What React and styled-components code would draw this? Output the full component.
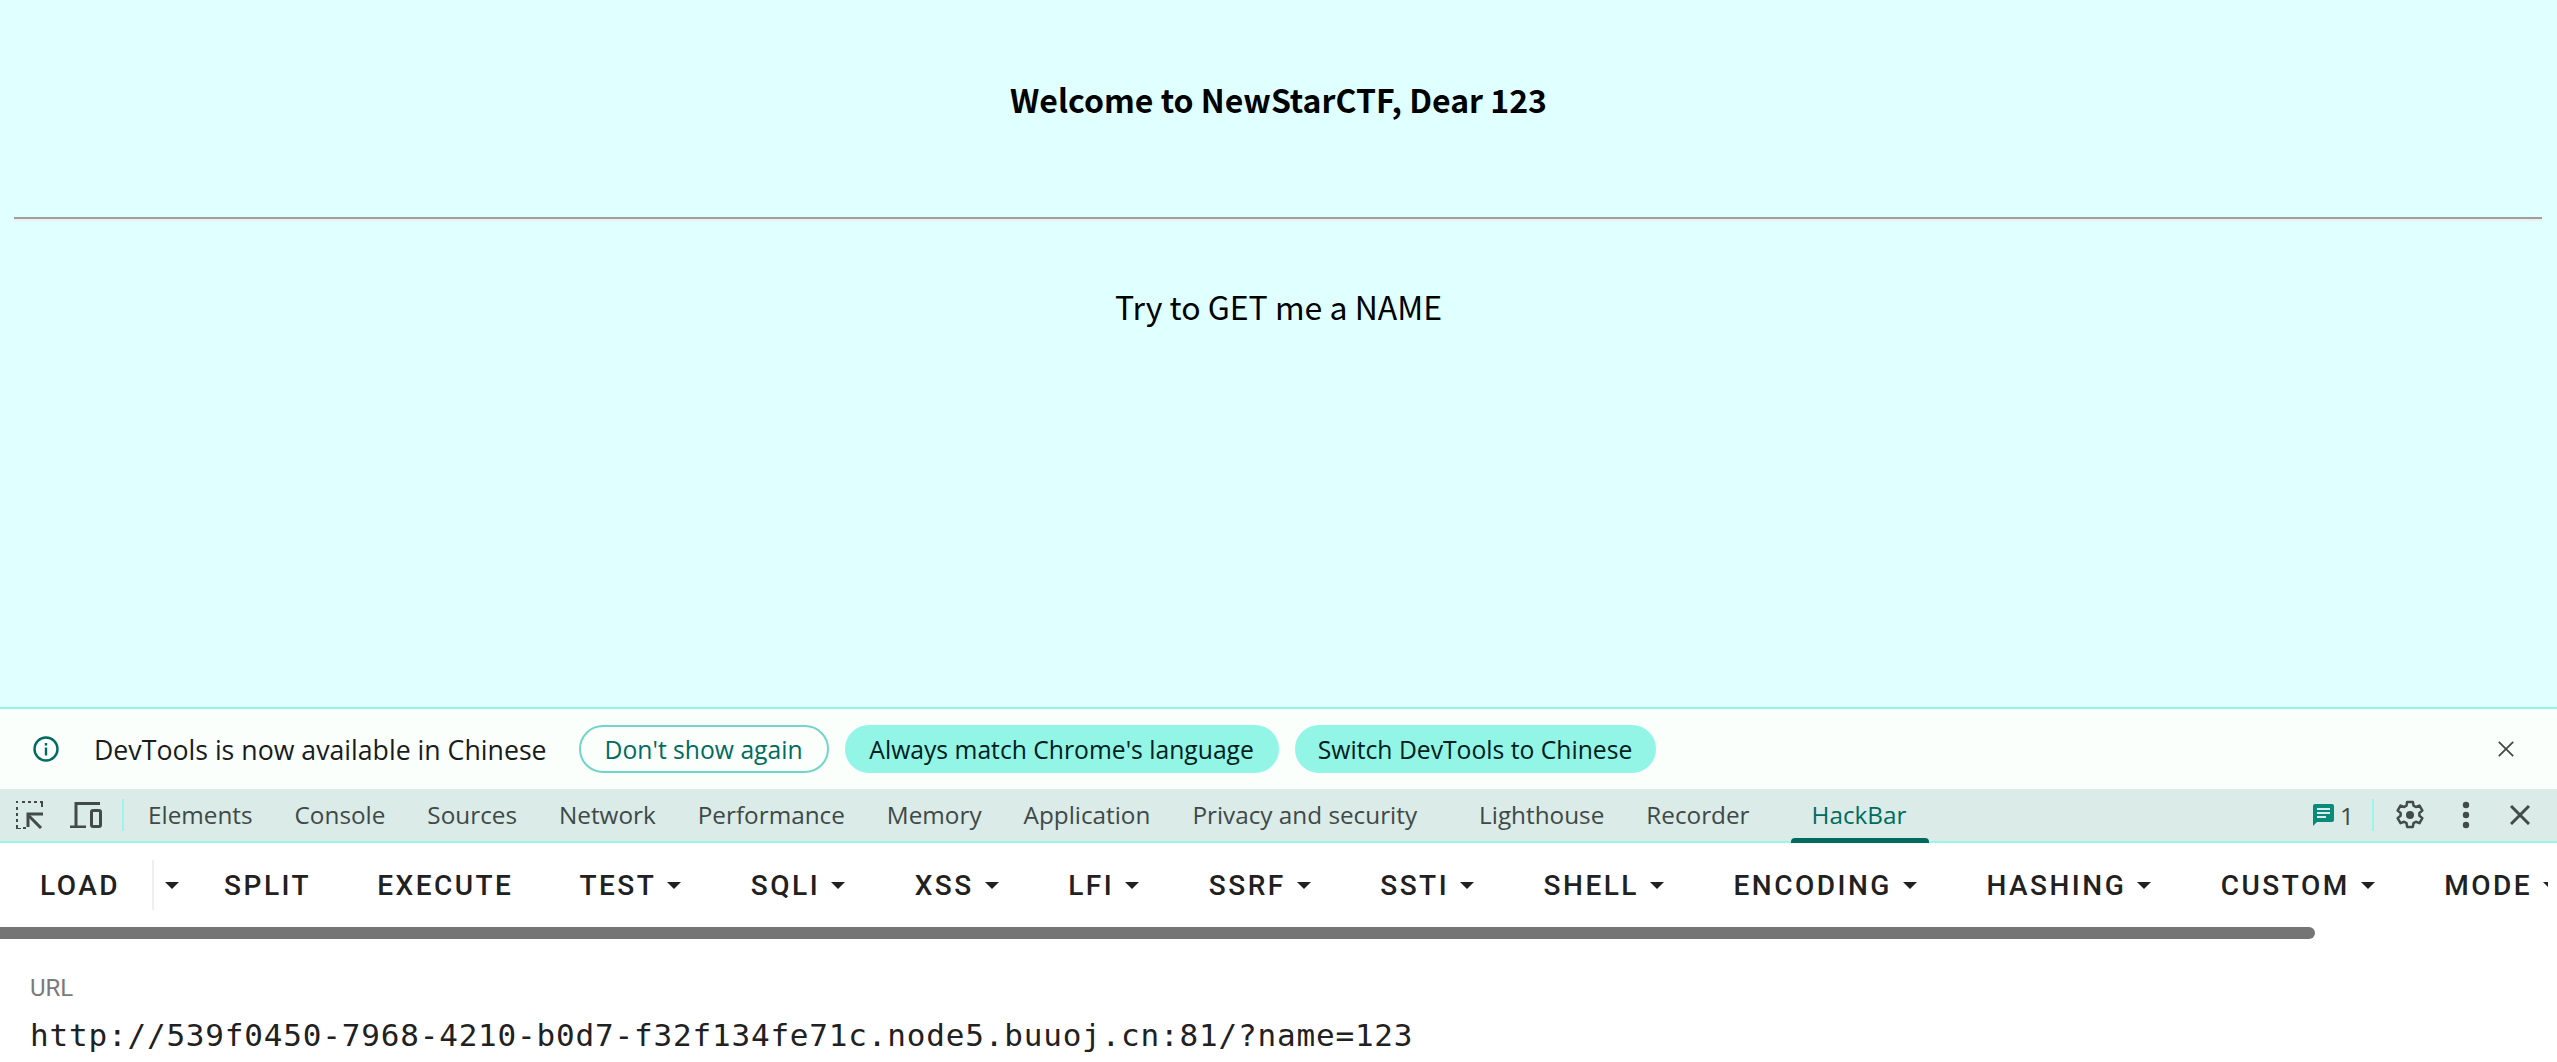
import React from 'react';
import styled, { createGlobalStyle } from 'styled-components';

const GlobalStyle = createGlobalStyle`
  html, body {
    margin: 0;
    padding: 0;
    height: 1062px;
    overflow: hidden;
    background: #ffffff;
  }
`;

const Screen = styled.div`
  width: 2557px;
  height: 1062px;
  display: flex;
  flex-direction: column;
  overflow: hidden;
`;

const Page = styled.main`
  height: 707px;
  flex: none;
  padding: 0 14px;
  background: #e0ffff;
  color: #000000;
  font-family: 'Noto Sans CJK SC', sans-serif;
  text-align: center;
`;

const Heading = styled.h3`
  margin: 0;
  height: 217px;
  padding-top: 71px;
  box-sizing: border-box;
  font-size: 32px;
  line-height: 56px;
  font-weight: 700;
`;

const Rule = styled.hr`
  margin: 0 1px 0 0;
  height: 2px;
  border: none;
  border-bottom: 2px solid #eeeeee;
  background: #9f9f9f;
`;

const Message = styled.p`
  margin: 0;
  padding-top: 61px;
  font-size: 32px;
  line-height: 48px;
`;

const InfoBar = styled.div`
  height: 82px;
  flex: none;
  box-sizing: border-box;
  border-top: 2px solid #93f5e6;
  padding: 0 43px 0 33px;
  display: flex;
  align-items: center;
  background: #fafffc;
  font-family: 'Open Sans', sans-serif;
  font-size: 26.7px;
`;

const InfoText = styled.span`
  margin-left: 35px;
  margin-right: 32px;
  color: #191c1b;
`;

const PillRow = styled.div`
  flex: 1;
  display: flex;
  gap: 16px;
`;

const Pill = styled.button`
  height: 48px;
  width: ${(props) => props.$width}px;
  padding: 0;
  box-sizing: border-box;
  border-radius: 24px;
  border: 2px solid ${(props) => (props.$filled ? '#92f5e6' : '#72d5c8')};
  background: ${(props) => (props.$filled ? '#92f5e6' : 'transparent')};
  color: ${(props) => (props.$filled ? '#00201c' : '#006b5f')};
  font-family: 'Open Sans', sans-serif;
  font-size: 24.7px;
`;

const TabBar = styled.div`
  height: 54px;
  flex: none;
  box-sizing: border-box;
  border-bottom: 2px solid #9bf5e8;
  display: flex;
  align-items: center;
  background: #daebe8;
  font-family: 'Open Sans', sans-serif;
  font-size: 24.3px;
  color: #3f4947;
`;

const ToolIcons = styled.div`
  display: flex;
  align-items: center;
  padding-left: 16px;
  gap: 26px;
`;

const Divider = styled.span`
  width: 2px;
  height: 32px;
  background: #9bf5e8;
  margin-left: ${(props) => props.$left || 0}px;
`;

const Tabs = styled.div`
  flex: 1;
  height: 100%;
  display: flex;
  align-items: center;
`;

const Tab = styled.span`
  position: relative;
  margin-left: ${(props) => props.$gap}px;
  color: ${(props) => (props.$active ? '#006b5f' : '#3f4947')};
  line-height: 52px;

  ${(props) =>
    props.$active &&
    `
    &::after {
      content: '';
      position: absolute;
      left: -21px;
      right: -22px;
      bottom: -2px;
      height: 5px;
      border-radius: 4px 4px 0 0;
      background: #006a5e;
    }
  `}
`;

const TabActions = styled.div`
  display: flex;
  align-items: center;
  padding-right: 27px;
`;

const Count = styled.span`
  margin-left: 6px;
  color: #3f4947;
`;

const ActionIcon = styled.svg`
  display: block;
  flex: none;
  margin-left: ${(props) => props.$left || 0}px;
`;

const Toolbar = styled.div`
  height: 84px;
  flex: none;
  margin-right: 9px;
  padding-left: 40px;
  display: flex;
  align-items: center;
  overflow: hidden;
  background: #ffffff;
  font-family: Roboto, sans-serif;
  font-size: 28px;
  font-weight: 500;
  letter-spacing: 2.5px;
  color: #212121;
  white-space: nowrap;
`;

const ToolGroup = styled.div`
  display: flex;
  align-items: center;
  flex: none;
  margin-right: ${(props) => props.$after}px;
`;

const ToolLabel = styled.span`
  display: block;
  flex: none;
  margin-right: ${(props) => props.$after || 0}px;
`;

const LoadSplit = styled.span`
  width: 2px;
  height: 50px;
  margin: 0 11px 0 32px;
  background: #efefef;
`;

const Caret = styled.span`
  width: 0;
  height: 0;
  flex: none;
  margin-left: ${(props) => props.$left}px;
  border-left: 7.5px solid transparent;
  border-right: 7.5px solid transparent;
  border-top: 7.5px solid #212121;
`;

const ScrollTrack = styled.div`
  height: 12px;
  flex: none;
`;

const ScrollThumb = styled.div`
  width: 2315px;
  height: 12px;
  border-radius: 0 6px 6px 0;
  background: #757575;
`;

const UrlField = styled.div`
  flex: 1;
  padding: 36px 30px 0;
  background: #ffffff;
`;

const UrlLabel = styled.div`
  font-family: Roboto, sans-serif;
  font-size: 24px;
  line-height: 26px;
  color: #7a7a7a;
`;

const UrlValue = styled.div`
  margin-top: 14px;
  font-family: 'DejaVu Sans Mono', monospace;
  font-size: 31px;
  letter-spacing: 0.82px;
  line-height: 40px;
  color: #212121;
  white-space: nowrap;
`;

const tabs = [
  ['Elements', 24],
  ['Console', 42],
  ['Sources', 42],
  ['Network', 42],
  ['Performance', 42],
  ['Memory', 42],
  ['Application', 42],
  ['Privacy and security', 42],
  ['Lighthouse', 62],
  ['Recorder', 42],
];

const menus = ['TEST', 'SQLI', 'XSS', 'LFI', 'SSRF', 'SSTI', 'SHELL', 'ENCODING', 'HASHING', 'CUSTOM', 'MODE'];

function InfoIcon() {
  return (
    <svg width="26" height="26" viewBox="0 0 26 26" fill="none" style={{ flex: 'none' }}>
      <circle cx="13" cy="13" r="11.5" stroke="#006b5f" strokeWidth="2.4" />
      <rect x="11.8" y="11.5" width="2.4" height="8" fill="#006b5f" />
      <rect x="11.8" y="7" width="2.4" height="2.6" fill="#006b5f" />
    </svg>
  );
}

function SelectIcon() {
  return (
    <svg width="28" height="28" viewBox="0 0 28 28" fill="none">
      <path d="M0 2V0H2V2ZM6 2V0H9V2ZM12 2V0H15V2ZM18 2V0H21V2ZM24 2V0H27V2V6H25V2ZM0 6H2V9H0ZM0 12H2V15H0ZM0 18H2V21H0ZM0 24H2V27H5V28H0ZM7 26H10V28H7Z" fill="#434b4a" />
      <path d="M25 27L13 15" stroke="#434b4a" strokeWidth="3" />
      <path d="M12 27V14H27" stroke="#434b4a" strokeWidth="3" fill="none" transform="translate(0 -1)" />
    </svg>
  );
}

function DeviceIcon() {
  return (
    <svg width="32" height="26" viewBox="0 0 32 26" fill="none">
      <path d="M0 25H16M6 25V1.5H30" stroke="#434b4a" strokeWidth="3" />
      <rect x="21.5" y="8.5" width="9" height="16" rx="1.5" stroke="#434b4a" strokeWidth="3" />
    </svg>
  );
}

function MessageIcon() {
  return (
    <ActionIcon width="21" height="22" viewBox="0 0 21 22">
      <path d="M2 0H19A2 2 0 0 1 21 2V16A2 2 0 0 1 19 18H4L0 22V2A2 2 0 0 1 2 0Z" fill="#0a8a7a" />
      <rect x="4" y="4" width="13" height="2" fill="#daebe8" />
      <rect x="4" y="8" width="13" height="2" fill="#daebe8" />
      <rect x="4" y="12" width="9" height="2" fill="#daebe8" />
    </ActionIcon>
  );
}

function GearIcon() {
  return (
    <ActionIcon $left={21} width="30" height="30" viewBox="0 0 24 24" fill="none">
      <path
        d="M9.7 1.500h4.600l.5 3 1.900 1.100 2.900-1.100 2.300 4-2.400 1.900v2.200l2.400 1.900-2.300 4-2.900-1.100-1.900 1.100-.5 3H9.700l-.5-3-1.900-1.100-2.900 1.100-2.300-4 2.400-1.900v-2.200L2.100 8.500l2.300-4 2.900 1.100 1.900-1.100z"
        stroke="#434b4a"
        strokeWidth="2"
        strokeLinejoin="round"
      />
      <circle cx="12" cy="12" r="3.2" fill="#434b4a" />
    </ActionIcon>
  );
}

function DotsIcon() {
  return (
    <ActionIcon $left={37} width="8" height="28" viewBox="0 0 8 28" fill="#434b4a">
      <circle cx="4" cy="4" r="3.2" />
      <circle cx="4" cy="14" r="3.2" />
      <circle cx="4" cy="24" r="3.2" />
    </ActionIcon>
  );
}

function CloseIcon({ size, left, width, color }) {
  return (
    <ActionIcon $left={left} width={size} height={size} viewBox="0 0 20 20" fill="none">
      <path d="M1 1L19 19M19 1L1 19" stroke={color} strokeWidth={width} />
    </ActionIcon>
  );
}

export default function App() {
  return (
    <Screen>
      <GlobalStyle />
      <Page>
        <Heading>Welcome to NewStarCTF, Dear 123</Heading>
        <Rule />
        <Message>Try to GET me a NAME</Message>
      </Page>
      <InfoBar>
        <InfoIcon />
        <InfoText>DevTools is now available in Chinese</InfoText>
        <PillRow>
          <Pill $width={250}>Don't show again</Pill>
          <Pill $width={434} $filled>Always match Chrome's language</Pill>
          <Pill $width={361} $filled>Switch DevTools to Chinese</Pill>
        </PillRow>
        <CloseIcon size={16} width={2.2} color="#3f4947" />
      </InfoBar>
      <TabBar>
        <ToolIcons>
          <SelectIcon />
          <DeviceIcon />
        </ToolIcons>
        <Divider $left={20} />
        <Tabs>
          {tabs.map(([name, gap]) => (
            <Tab key={name} $gap={gap}>{name}</Tab>
          ))}
          <Tab $gap={62} $active>HackBar</Tab>
        </Tabs>
        <TabActions>
          <MessageIcon />
          <Count>1</Count>
          <Divider $left={18} />
          <GearIcon />
          <DotsIcon />
          <CloseIcon size={20} left={40} width={3} color="#434b4a" />
        </TabActions>
      </TabBar>
      <Toolbar>
        <ToolGroup $after={45}>
          <ToolLabel>LOAD</ToolLabel>
          <LoadSplit />
          <Caret $left={0} />
        </ToolGroup>
        <ToolLabel $after={66}>SPLIT</ToolLabel>
        <ToolLabel $after={66}>EXECUTE</ToolLabel>
        {menus.map((name) => (
          <ToolGroup key={name} $after={69.5}>
            <ToolLabel>{name}</ToolLabel>
            <Caret $left={11} />
          </ToolGroup>
        ))}
      </Toolbar>
      <ScrollTrack>
        <ScrollThumb />
      </ScrollTrack>
      <UrlField>
        <UrlLabel>URL</UrlLabel>
        <UrlValue>http://539f0450-7968-4210-b0d7-f32f134fe71c.node5.buuoj.cn:81/?name=123</UrlValue>
      </UrlField>
    </Screen>
  );
}
